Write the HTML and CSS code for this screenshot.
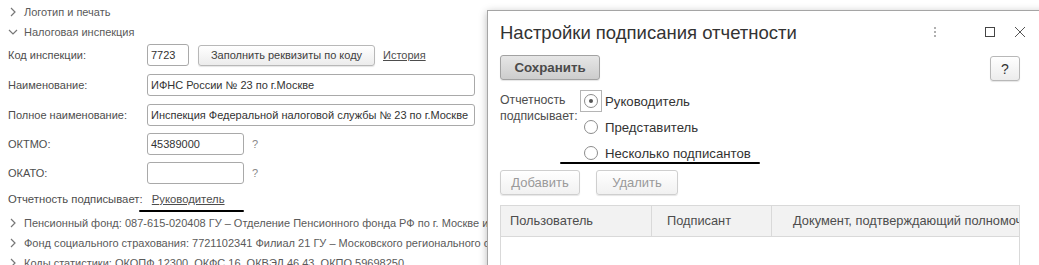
FILE: index.html
```html
<!DOCTYPE html>
<html lang="ru">
<head>
    <meta charset="UTF-8">
    <title>Налоговая инспекция</title>
    <link rel="stylesheet" href="styles.css">
</head>
<body>

<div class="page">
    <div class="group-head">
        <svg class="chev" width="8" height="10" viewBox="0 0 8 10"><path d="M2 1l4 4-4 4" fill="none" stroke="#777" stroke-width="1.2"/></svg>
        Логотип и печать
    </div>
    <div class="group-head">
        <svg class="chev" width="10" height="10" viewBox="0 0 10 10"><path d="M1 3l4 4 4-4" fill="none" stroke="#777" stroke-width="1.2"/></svg>
        Налоговая инспекция
    </div>

    <div class="form-row first">
        <span class="label">Код инспекции:</span>
        <div class="field code">7723</div>
        <button class="btn fill-btn" type="button">Заполнить реквизиты по коду</button>
        <a class="link history">История</a>
    </div>
    <div class="form-row">
        <span class="label">Наименование:</span>
        <div class="field wide">ИФНС России № 23 по г.Москве</div>
    </div>
    <div class="form-row">
        <span class="label">Полное наименование:</span>
        <div class="field wide">Инспекция Федеральной налоговой службы № 23 по г.Москве</div>
    </div>
    <div class="form-row tight">
        <span class="label">ОКТМО:</span>
        <div class="field short">45389000</div>
        <span class="hint">?</span>
    </div>
    <div class="form-row tight">
        <span class="label">ОКАТО:</span>
        <div class="field short"></div>
        <span class="hint">?</span>
    </div>
    <div class="signer-row">
        Отчетность подписывает:
        <a class="link signer">Руководитель</a>
        <span class="marker marker-left"></span>
    </div>

    <div class="group-head">
        <svg class="chev" width="8" height="10" viewBox="0 0 8 10"><path d="M2 1l4 4-4 4" fill="none" stroke="#777" stroke-width="1.2"/></svg>
        Пенсионный фонд: 087-615-020408 ГУ – Отделение Пенсионного фонда РФ по г. Москве и Московской области
    </div>
    <div class="group-head">
        <svg class="chev" width="8" height="10" viewBox="0 0 8 10"><path d="M2 1l4 4-4 4" fill="none" stroke="#777" stroke-width="1.2"/></svg>
        Фонд социального страхования: 7721102341 Филиал 21 ГУ – Московского регионального отделения
    </div>
    <div class="group-head">
        <svg class="chev" width="8" height="10" viewBox="0 0 8 10"><path d="M2 1l4 4-4 4" fill="none" stroke="#777" stroke-width="1.2"/></svg>
        Коды статистики: ОКОПФ 12300, ОКФС 16, ОКВЭД 46.43, ОКПО 59698250
    </div>
</div>

<div class="window">
    <div class="window-head">
        <span class="window-title">Настройки подписания отчетности</span>
        <div class="window-tools">
            <svg width="4" height="12" viewBox="0 0 4 12"><g fill="#b0b0b0"><rect x="1" y="1" width="2" height="2"/><rect x="1" y="5" width="2" height="2"/><rect x="1" y="9" width="2" height="2"/></g></svg>
            <svg width="12" height="12" viewBox="0 0 12 12"><rect x="1.5" y="1.5" width="9" height="9" fill="none" stroke="#444" stroke-width="1"/></svg>
            <svg width="12" height="12" viewBox="0 0 12 12"><path d="M1 1l10 10M11 1L1 11" stroke="#555" stroke-width="1"/></svg>
        </div>
    </div>

    <div class="content">
        <div class="toolbar">
            <button class="btn save-btn" type="button">Сохранить</button>
            <button class="btn help-btn" type="button">?</button>
        </div>

        <div class="radio-block">
            <div class="radio-label">Отчетность<br>подписывает:</div>
            <div class="radio-list">
                <div class="radio-item">
                    <span class="focus-box"><span class="radio checked"></span></span>
                    Руководитель
                </div>
                <div class="radio-item">
                    <span class="focus-box plain"><span class="radio"></span></span>
                    Представитель
                </div>
                <div class="radio-item">
                    <span class="focus-box plain"><span class="radio"></span></span>
                    Несколько подписантов
                </div>
                <span class="marker marker-right"></span>
            </div>
        </div>

        <div class="table-tools">
            <button class="btn disabled add-btn" type="button">Добавить</button>
            <button class="btn disabled del-btn" type="button">Удалить</button>
        </div>

        <div class="grid">
            <div class="grid-head">
                <div class="col col-user">Пользователь</div>
                <div class="col col-signer">Подписант</div>
                <div class="col col-doc">Документ, подтверждающий полномочия представителя</div>
            </div>
            <div class="grid-body"></div>
        </div>
    </div>
</div>

</body>
</html>
```

FILE: styles.css
```css
html,
body {
    height: 265px;
    overflow: hidden;
}
body {
    margin: 0;
    background: #fff;
    font-family: "Liberation Sans", Arial, sans-serif;
    font-size: 11px;
    color: #4d4d4d;
    position: relative;
}
.page {
    padding: 2px 0 0 8px;
    width: 479px;
    height: 263px;
    overflow: hidden;
}
.group-head {
    height: 20px;
    line-height: 20px;
    color: #5a5a5a;
    white-space: nowrap;
    display: flex;
    align-items: center;
}
.chev {
    width: 10px;
    margin-right: 6px;
    flex: none;
}
.form-row {
    display: flex;
    align-items: center;
    height: 22px;
    margin-top: 8px;
}
.form-row.first {
    margin-top: 2px;
}
.form-row.tight {
    margin-top: 7px;
}
.label {
    width: 139px;
    flex: none;
}
.field {
    box-sizing: border-box;
    height: 22px;
    line-height: 20px;
    border: 1px solid #a9a9a9;
    border-radius: 3px;
    padding: 0 3px;
    color: #333;
    background: #fff;
    white-space: nowrap;
    overflow: hidden;
}
.field.code {
    width: 42px;
}
.field.wide {
    width: 328px;
}
.field.short {
    width: 97px;
}
.hint {
    margin-left: 8px;
    color: #888;
}
.btn {
    box-sizing: border-box;
    font-family: inherit;
    border: 1px solid #b8b8b8;
    border-radius: 3px;
    background: linear-gradient(#ffffff, #ececec);
    color: #404040;
    padding: 0;
    box-shadow: 0 1px 1px rgba(0, 0, 0, 0.1);
}
.fill-btn {
    margin-left: 9px;
    width: 177px;
    height: 21px;
    font-size: 11px;
}
.link {
    color: #4d4d4d;
    text-decoration: underline;
}
.history {
    margin-left: 8px;
}
.signer-row {
    position: relative;
    height: 20px;
    line-height: 20px;
    margin-top: 5px;
    margin-bottom: 4px;
    font-size: 11.3px;
}
.signer {
    margin-left: 6px;
}
.marker {
    position: absolute;
    height: 2px;
    background: #000;
    border-radius: 1px;
}
.marker-left {
    left: 131px;
    width: 105px;
    top: 21px;
}

/* окно настроек */
.window {
    position: absolute;
    left: 487px;
    top: 10px;
    width: 580px;
    height: 300px;
    background: #fff;
    border: 1px solid #a5a5a5;
    box-shadow: 0 2px 8px rgba(0, 0, 0, 0.28);
    font-size: 13px;
}
.window-head {
    height: 42px;
    display: flex;
    align-items: center;
    padding: 0 12px;
    width: 520px;
}
.window-title {
    font-size: 18.5px;
    color: #333;
    flex: 1;
    padding-top: 1px;
}
.window-tools {
    display: flex;
    align-items: center;
    margin-right: -6px;
}
.window-tools svg:nth-child(1) {
    margin-right: 47px;
}
.window-tools svg:nth-child(2) {
    margin-right: 18px;
}
.content {
    width: 520px;
    padding: 2px 12px 0;
}
.toolbar {
    display: flex;
    justify-content: space-between;
}
.save-btn {
    width: 100px;
    height: 25px;
    font-size: 13.3px;
    font-weight: bold;
    color: #4a4a4a;
    border-color: #a2a2a2;
    background: linear-gradient(#e6e6e6, #cdcdcd);
}
.help-btn {
    width: 30px;
    height: 25px;
    margin-top: 1px;
    font-size: 14px;
    color: #333;
}
.radio-block {
    display: flex;
    margin-top: 7px;
}
.radio-label {
    width: 80px;
    line-height: 16px;
    padding-top: 4px;
    font-size: 12.3px;
    white-space: nowrap;
}
.radio-list {
    position: relative;
}
.radio-item {
    height: 26px;
    display: flex;
    align-items: center;
    color: #333;
    font-size: 13.2px;
}
.focus-box {
    box-sizing: border-box;
    width: 22px;
    height: 22px;
    border: 1px solid #b5b5b5;
    display: flex;
    align-items: center;
    justify-content: center;
    margin-right: 3px;
}
.focus-box.plain {
    border-color: transparent;
}
.radio {
    box-sizing: border-box;
    width: 14px;
    height: 14px;
    border: 1px solid #8c8c8c;
    border-radius: 50%;
    background: #fff;
    display: flex;
    align-items: center;
    justify-content: center;
}
.radio.checked::after {
    content: "";
    width: 4px;
    height: 4px;
    border-radius: 50%;
    background: #555;
}
.marker-right {
    left: -20px;
    width: 200px;
    top: 74px;
}
.table-tools {
    display: flex;
    gap: 16px;
    margin-top: 4px;
}
.btn.disabled {
    color: #9a9a9a;
    border-color: #cfcfcf;
    height: 25px;
    font-size: 13px;
    background: linear-gradient(#ffffff, #f1f1f1);
}
.add-btn {
    width: 80px;
}
.del-btn {
    width: 82px;
}
.grid {
    margin-top: 10px;
    border: 1px solid #d9d9d9;
    height: 120px;
}
.grid-head {
    display: flex;
    height: 30px;
    background: #f2f2f2;
    border-bottom: 1px solid #d9d9d9;
    font-size: 12.8px;
    color: #4d4d4d;
}
.col {
    line-height: 30px;
    white-space: nowrap;
    overflow: hidden;
    box-sizing: border-box;
}
.col-user {
    width: 151px;
    padding-left: 9px;
    border-right: 1px solid #d9d9d9;
}
.col-signer {
    width: 120px;
    padding-left: 15px;
    border-right: 1px solid #d9d9d9;
}
.col-doc {
    flex: 1;
    padding-left: 21px;
}
```
